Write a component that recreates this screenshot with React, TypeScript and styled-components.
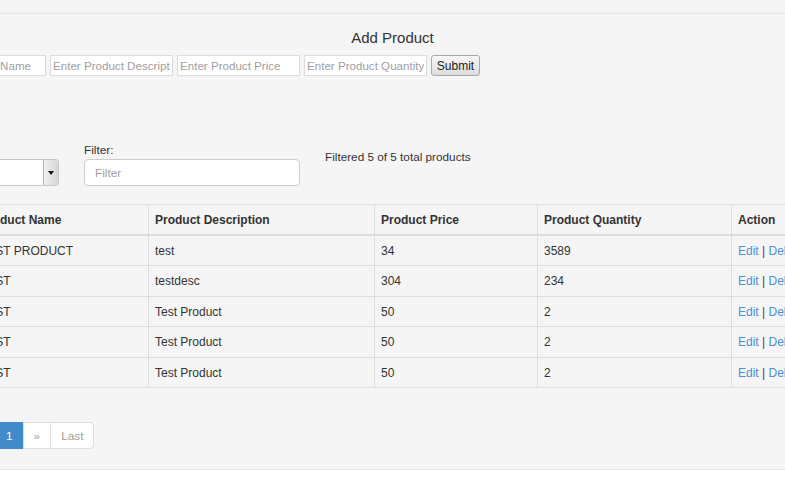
import React from "react";
import styled, { createGlobalStyle } from "styled-components";

const GlobalStyle = createGlobalStyle`
  html, body {
    margin: 0;
    padding: 0;
    background: #ffffff;
  }
  body {
    font-family: "Liberation Sans", Arial, sans-serif;
    color: #333333;
  }
`;

const Page = styled.div`
  width: 785px;
  height: 487px;
  overflow: hidden;
  display: flex;
  flex-direction: column;
  background: #f5f5f5;
`;

const TopBar = styled.div`
  height: 13px;
  flex-shrink: 0;
  border-bottom: 1px solid #e6e6e6;
`;

const AddSection = styled.section`
  padding-top: 15px;
`;

const Heading = styled.h3`
  margin: 0 0 8px;
  font-size: 15px;
  line-height: 18px;
  font-weight: normal;
  text-align: center;
  color: #333;
`;

const ProductForm = styled.form`
  display: flex;
  gap: 4px;
  margin-left: -77px;
  height: 21px;
`;

const FormInput = styled.input`
  box-sizing: border-box;
  width: 123px;
  height: 21px;
  flex-shrink: 0;
  padding: 1px 2px;
  border: 1px solid #dcdcdc;
  background: #fff;
  font-family: "Liberation Sans", Arial, sans-serif;
  font-size: 11.6px;
  color: #333;
  &::placeholder {
    color: #a0a0a0;
  }
`;

const SubmitButton = styled.button`
  box-sizing: border-box;
  width: 49px;
  height: 21px;
  padding: 0;
  border: 1px solid #a9a9a9;
  border-radius: 3px;
  background: linear-gradient(#f8f8f8, #dcdcdc);
  font-family: "Liberation Sans", Arial, sans-serif;
  font-size: 12px;
  color: #222;
`;

const ListSection = styled.section`
  margin-left: -27px;
  margin-top: 67px;
`;

const Controls = styled.div`
  display: flex;
  align-items: flex-start;
  height: 43px;
`;

const SelectBox = styled.div`
  align-self: flex-end;
  box-sizing: border-box;
  width: 86px;
  height: 27px;
  display: flex;
  border: 1px solid #c8c8c8;
  border-radius: 3px;
  background: #fff;
  overflow: hidden;
`;

const SelectValue = styled.div`
  flex: 1;
`;

const SelectArrow = styled.div`
  width: 14px;
  display: flex;
  align-items: center;
  justify-content: center;
  border-left: 1px solid #b5b5b5;
  background: linear-gradient(90deg, #f0f0f0, #d6d6d6);
  &::after {
    content: "";
    border-left: 3px solid transparent;
    border-right: 3px solid transparent;
    border-top: 4px solid #111;
  }
`;

const FilterGroup = styled.div`
  margin-left: 25px;
  width: 216px;
  display: flex;
  flex-direction: column;
  gap: 2px;
`;

const Label = styled.label`
  font-size: 11.8px;
  line-height: 14px;
`;

const FilterInput = styled.input`
  box-sizing: border-box;
  width: 216px;
  height: 27px;
  padding: 4px 10px;
  border: 1px solid #cccccc;
  border-radius: 4px;
  background: #fff;
  font-family: "Liberation Sans", Arial, sans-serif;
  font-size: 11.8px;
  color: #333;
  &::placeholder {
    color: #a0a0a0;
  }
`;

const CountText = styled.div`
  margin-left: 25px;
  margin-top: 7px;
  font-size: 11.75px;
  line-height: 14px;
`;

const Table = styled.table`
  margin-top: 18px;
  border-collapse: collapse;
  table-layout: fixed;
  width: 878px;
  font-size: 12px;
`;

const Th = styled.th`
  padding: 8px 6px 6px;
  line-height: 15px;
  text-align: left;
  font-weight: bold;
  border: 1px solid #dddddd;
  border-bottom-width: 2px;
  white-space: nowrap;
  overflow: hidden;
`;

const Td = styled.td`
  padding: 8px 6px 7px;
  line-height: 14.4px;
  border: 1px solid #dddddd;
  white-space: nowrap;
  overflow: hidden;
`;

const ActionLink = styled.a`
  color: #4a90d6;
  text-decoration: none;
`;

const Sep = styled.span`
  color: #4a3d5c;
`;

const Pagination = styled.ul`
  display: flex;
  list-style: none;
  margin: 34px 0 0 23px;
  padding: 0;
`;

const PageItem = styled.li<{ $active?: boolean; $last?: boolean }>`
  box-sizing: border-box;
  height: 27px;
  padding: 0 10px;
  margin-left: -1px;
  display: flex;
  align-items: center;
  font-size: 11.8px;
  border: 1px solid ${(p) => (p.$active ? "#428bca" : "#dddddd")};
  background: ${(p) => (p.$active ? "#428bca" : "#ffffff")};
  color: ${(p) => (p.$active ? "#ffffff" : "#a0a0a0")};
  border-radius: ${(p) => (p.$last ? "0 4px 4px 0" : "0")};
`;

const Footer = styled.footer`
  margin-top: 20px;
  flex: 1;
  background: #ffffff;
  border-top: 1px solid #e6e6e6;
`;

const products = [
  { name: "TEST PRODUCT", description: "test", price: "34", quantity: "3589" },
  { name: "TEST", description: "testdesc", price: "304", quantity: "234" },
  { name: "TEST", description: "Test Product", price: "50", quantity: "2" },
  { name: "TEST", description: "Test Product", price: "50", quantity: "2" },
  { name: "TEST", description: "Test Product", price: "50", quantity: "2" },
];

const App: React.FC = () => {
  return (
    <>
      <GlobalStyle />
      <Page>
        <TopBar />
        <AddSection>
          <Heading>Add Product</Heading>
          <ProductForm onSubmit={(e) => e.preventDefault()}>
            <FormInput type="text" placeholder="Enter Product Name" />
            <FormInput type="text" placeholder="Enter Product Description" />
            <FormInput type="text" placeholder="Enter Product Price" />
            <FormInput type="text" placeholder="Enter Product Quantity" />
            <SubmitButton type="submit">Submit</SubmitButton>
          </ProductForm>
        </AddSection>

        <ListSection>
          <Controls>
            <SelectBox>
              <SelectValue />
              <SelectArrow />
            </SelectBox>
            <FilterGroup>
              <Label htmlFor="filter">Filter:</Label>
              <FilterInput id="filter" type="text" placeholder="Filter" />
            </FilterGroup>
            <CountText>Filtered 5 of 5 total products</CountText>
          </Controls>

          <Table>
            <colgroup>
              <col style={{ width: 175 }} />
              <col style={{ width: 226 }} />
              <col style={{ width: 163 }} />
              <col style={{ width: 194 }} />
              <col style={{ width: 120 }} />
            </colgroup>
            <thead>
              <tr>
                <Th>Product Name</Th>
                <Th>Product Description</Th>
                <Th>Product Price</Th>
                <Th>Product Quantity</Th>
                <Th>Action</Th>
              </tr>
            </thead>
            <tbody>
              {products.map((p, i) => (
                <tr key={i}>
                  <Td>{p.name}</Td>
                  <Td>{p.description}</Td>
                  <Td>{p.price}</Td>
                  <Td>{p.quantity}</Td>
                  <Td>
                    <ActionLink href="#">Edit</ActionLink> <Sep>|</Sep>{" "}
                    <ActionLink href="#">Delete</ActionLink>
                  </Td>
                </tr>
              ))}
            </tbody>
          </Table>

          <Pagination>
            <PageItem $active>1</PageItem>
            <PageItem>»</PageItem>
            <PageItem $last>Last</PageItem>
          </Pagination>
        </ListSection>
        <Footer />
      </Page>
    </>
  );
};

export default App;
